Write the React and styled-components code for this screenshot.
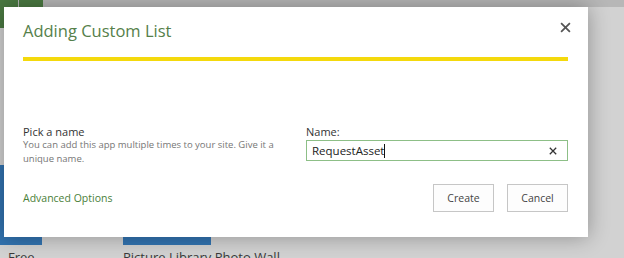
import React from 'react';
import styled, { createGlobalStyle } from 'styled-components';

const Global = createGlobalStyle`
  html, body {
    margin: 0;
    padding: 0;
    background: #cfcfcf;
  }
  body {
    font-family: 'Open Sans', 'Noto Sans', sans-serif;
  }
`;

const Page = styled.div`
  position: relative;
  width: 624px;
  height: 258px;
  overflow: hidden;
  background: #d2d2d2;
`;

const TopStrip = styled.div`
  display: flex;
  gap: 1px;
  height: 7px;
  background: #b7b7b7;
`;

const GreenTile = styled.div`
  width: ${p => p.w}px;
  height: 28px;
  background: #4b7a42;
`;

const TileRow = styled.div`
  display: flex;
  gap: 81px;
  margin-top: 158px;
`;

const Tile = styled.div`
  display: flex;
  flex-direction: column;
  width: ${p => p.w}px;
`;

const BlueBox = styled.div`
  height: 80px;
  background: #3273b0;
`;

const TileLabel = styled.span`
  margin-top: 3px;
  padding-left: ${p => p.pad || 0}px;
  font-size: 13px;
  color: #3a3a3a;
  white-space: nowrap;
`;

const Dialog = styled.div`
  position: absolute;
  left: 4px;
  top: 7px;
  width: 584px;
  height: 230px;
  box-sizing: border-box;
  background: #fff;
  box-shadow: 0 0 20px rgba(0, 0, 0, 0.32);
  display: flex;
  flex-direction: column;
  padding: 10px 20px 0 19px;
`;

const Header = styled.div`
  display: flex;
  justify-content: space-between;
  align-items: flex-start;
`;

const Title = styled.h1`
  margin: 0;
  font-size: 16.5px;
  line-height: 28px;
  font-weight: 400;
  color: #55804a;
`;

const CloseBtn = styled.button`
  border: none;
  background: none;
  padding: 0;
  margin: 5px -4px 0 0;
  width: 12px;
  height: 12px;
  cursor: pointer;
  display: flex;
`;

const Rule = styled.div`
  height: 4px;
  margin-top: 12px;
  background: #f4d90c;
`;

const Body = styled.div`
  display: grid;
  grid-template-columns: 283px 1fr;
  margin-top: 63px;
`;

const Section = styled.div`
  display: flex;
  flex-direction: column;
`;

const Heading = styled.label`
  font-size: 11px;
  line-height: 16px;
  color: #333;
`;

const Help = styled.p`
  margin: -2px 0 0;
  width: 255px;
  font-size: 9.5px;
  line-height: 14px;
  color: #767676;
`;

const InputBox = styled.div`
  display: flex;
  align-items: center;
  height: 21px;
  box-sizing: border-box;
  border: 1px solid #8dbf87;
  padding: 0 10px 0 5px;
`;

const InputText = styled.span`
  flex: 1;
  font-size: 11.5px;
  color: #222;
  display: flex;
  align-items: center;
`;

const Caret = styled.span`
  display: inline-block;
  width: 1px;
  height: 14px;
  background: #111;
`;

const Footer = styled.div`
  display: flex;
  justify-content: space-between;
  align-items: center;
  margin-top: 18px;
`;

const Link = styled.a`
  font-size: 10.5px;
  color: #4a8039;
  text-decoration: none;
`;

const Buttons = styled.div`
  display: flex;
  gap: 13px;
`;

const Button = styled.button`
  width: 61px;
  height: 28px;
  border: 1px solid #c6c6c6;
  background: #fdfdfd;
  font-family: inherit;
  font-size: 10.5px;
  color: #444;
  padding: 0;
`;

const Cross = ({ size, stroke }) => (
  <svg width={size} height={size} viewBox="0 0 10 10">
    <path d="M1 1 L9 9 M9 1 L1 9" stroke={stroke} strokeWidth="1.6" fill="none" />
  </svg>
);

export default function App() {
  return (
    <Page>
      <Global />
      <TopStrip>
        <GreenTile w={18} />
        <GreenTile w={24} />
      </TopStrip>
      <TileRow>
        <Tile w={42}>
          <BlueBox />
          <TileLabel pad={8}>Free</TileLabel>
        </Tile>
        <Tile w={88}>
          <BlueBox />
          <TileLabel>Picture Library Photo Wall</TileLabel>
        </Tile>
      </TileRow>

      <Dialog>
        <Header>
          <Title>Adding Custom List</Title>
          <CloseBtn aria-label="Close">
            <Cross size={11} stroke="#555" />
          </CloseBtn>
        </Header>
        <Rule />
        <Body>
          <Section>
            <Heading>Pick a name</Heading>
            <Help>You can add this app multiple times to your site. Give it a unique name.</Help>
          </Section>
          <Section>
            <Heading>Name:</Heading>
            <InputBox>
              <InputText>
                RequestAsset
                <Caret />
              </InputText>
              <Cross size={8} stroke="#333" />
            </InputBox>
          </Section>
        </Body>
        <Footer>
          <Link href="#">Advanced Options</Link>
          <Buttons>
            <Button>Create</Button>
            <Button>Cancel</Button>
          </Buttons>
        </Footer>
      </Dialog>
    </Page>
  );
}
